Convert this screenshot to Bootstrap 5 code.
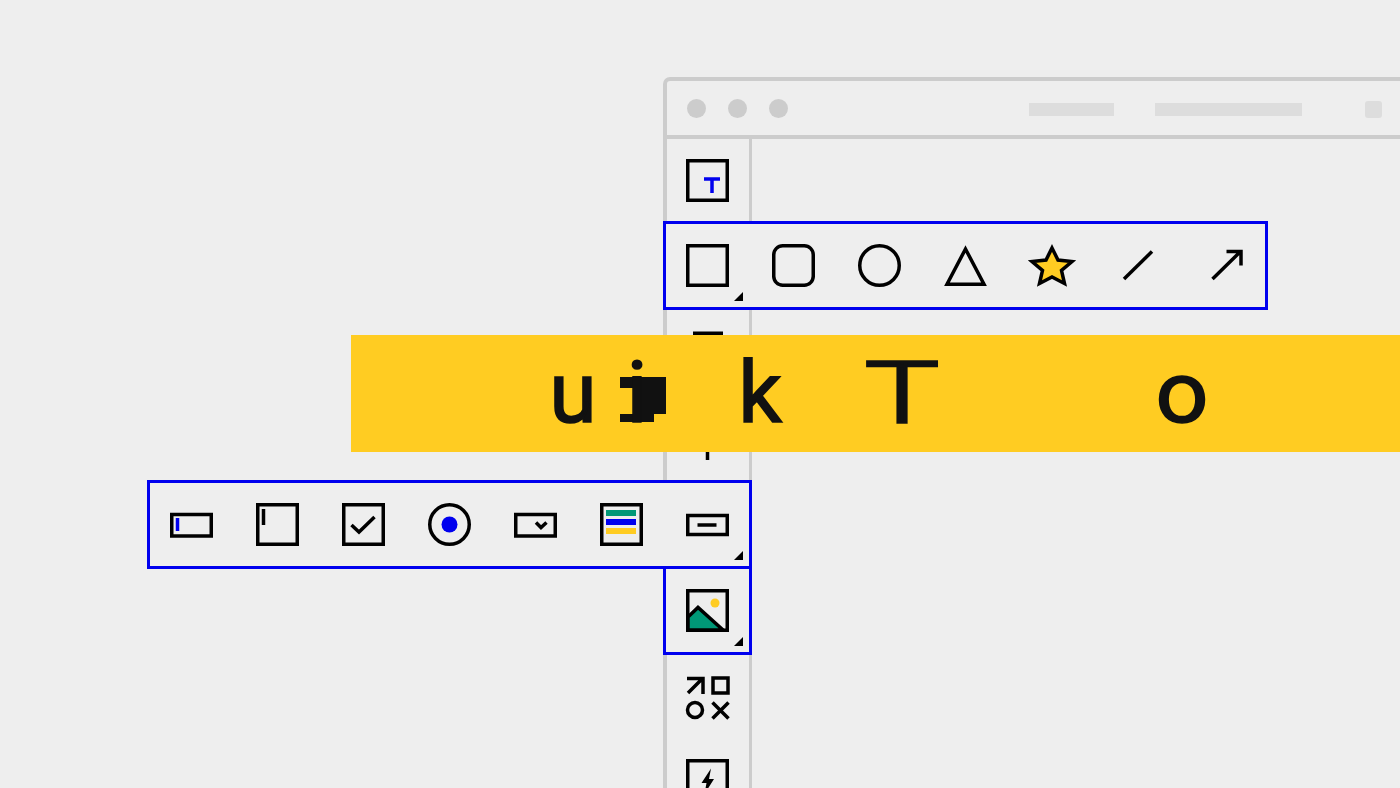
<!DOCTYPE html>
<html lang="en">

<head>
    <meta charset="UTF-8">
    <meta name="viewport" content="width=device-width, initial-scale=1.0">
    <title>Toolbox</title>
    <link href="https://cdn.jsdelivr.net/npm/bootstrap@5.3.0/dist/css/bootstrap.min.css" rel="stylesheet">
    <style>
        body { background: #eee; }
        .stage { width: 1400px; height: 788px; background: #eee; }
        .app-window { left: 663px; top: 77px; width: 800px; height: 800px; border: 4px solid #ccc; border-radius: 7px 0 0 0; }
        .title-bar { height: 58px; border-bottom: 4px solid #ccc; padding-left: 20px; }
        .dots { gap: 22px; }
        .dot { width: 19px; height: 19px; border-radius: 50%; background: #ccc; }
        .ghost { height: 13px; background: #ddd; margin-top: 3px; }
        .ghost-a { width: 85px; margin-left: 241px; }
        .ghost-b { width: 147px; margin-left: 41px; }
        .ghost-c { width: 17px; height: 17px; margin-left: 63px; margin-top: 3px; border-radius: 3px; }
        .side-bar { width: 85px; height: 700px; border-right: 3px solid #ccc; padding: 20px 0 0 19px; gap: 43px; }
        .tool { width: 43px; height: 43px; flex: none; }
        .tool svg { display: block; overflow: visible; fill: none; stroke: #000; stroke-width: 3.5; }
        .tool-up { margin-top: -2px; }
        .corner { right: -14px; bottom: -14px; width: 9px; height: 9px; background: #000; clip-path: polygon(100% 0, 100% 100%, 0 100%); }
        .tray { border: 3px solid #0000ee; padding: 20px; gap: 43px; background: #eee; }
        .tray-shapes { left: 663px; top: 221px; }
        .tray-forms { left: 147px; top: 480px; }
        .tray-media { left: 663px; top: 566px; }
        .banner { left: 351px; top: 335px; width: 1049px; height: 117px; background: #fc2; color: #111; }
        .word { display: grid; grid-template-columns: 80px 60px 174px 110px 450px; padding-left: 182px; height: 117px; font: 86px/116px Roboto, sans-serif; -webkit-text-stroke: 1.6px #111; }
        .word span { text-align: center; position: relative; }
        .wide-t { display: block; font-weight: 300; transform: scaleX(1.45); -webkit-text-stroke: 2.6px #111; }
        .big-o { display: block; transform: scaleX(1.08); }
        .blob { left: 7px; top: 42px; width: 46px; height: 45px; background: #111; clip-path: polygon(0 0, 100% 0, 100% 37px, 34px 37px, 34px 100%, 0 100%, 0 37px, 14px 37px, 14px 11px, 0 11px); }
        .stem { left: -6px; }
    </style>
</head>

<body>
    <div class="stage position-relative overflow-hidden">

        <div class="app-window position-absolute">
            <div class="title-bar d-flex align-items-center">
                <div class="dots d-flex">
                    <div class="dot"></div>
                    <div class="dot"></div>
                    <div class="dot"></div>
                </div>
                <div class="ghost ghost-a"></div>
                <div class="ghost ghost-b"></div>
                <div class="ghost ghost-c"></div>
            </div>
            <div class="side-bar d-flex flex-column">
                <div class="tool"><svg width="43" height="43"><rect x="1.75" y="1.75" width="39.5" height="39.500"/><path d="M18 20H34M26 20V34" stroke="#0000ee" stroke-width="3.5"/></svg></div>
                <div class="tool"></div>
                <div class="tool"><svg width="43" height="43"><path d="M7 2.500H37" stroke-width="4"/></svg></div>
                <div class="tool"><svg width="43" height="43"><path d="M21.500 0V43"/></svg></div>
                <div class="tool"></div>
                <div class="tool"></div>
                <div class="tool"><svg width="43" height="43"><path d="M1 3.500H17V19M2 18L16 4"/><rect x="27" y="3" width="15" height="15"/><circle cx="9" cy="35" r="7.500"/><path d="M26.500 27.500L42.500 43.500M42.500 27.500L26.500 43.500"/></svg></div>
                <div class="tool tool-up"><svg width="43" height="43"><rect x="1.75" y="1.75" width="39.5" height="39.500"/><path d="M25 9.500L15.500 24H20.500L18.500 35L28 20H23Z" fill="#000" stroke="none"/></svg></div>
            </div>
        </div>

        <div class="tray tray-shapes position-absolute d-flex">
            <div class="tool position-relative"><svg width="43" height="43"><rect x="1.75" y="1.75" width="39.5" height="39.500"/></svg><div class="corner position-absolute"></div></div>
            <div class="tool"><svg width="43" height="43"><rect x="1.75" y="1.75" width="39.5" height="39.500" rx="9"/></svg></div>
            <div class="tool"><svg width="43" height="43"><circle cx="21.500" cy="21.500" r="19.750"/></svg></div>
            <div class="tool"><svg width="43" height="43"><path d="M21.500 5L40 40.250H3Z"/></svg></div>
            <div class="tool"><svg width="43" height="43"><path d="M22 4L28 16L42 17.500L31.500 26.500L34.500 39.500L22 33L9.500 39.500L12.500 26.500L2 17.500L16 16Z" fill="#fc2"/></svg></div>
            <div class="tool"><svg width="43" height="43"><path d="M8 35L36 7.500"/></svg></div>
            <div class="tool"><svg width="43" height="43"><path d="M10.500 35L38 8M24.500 7.500H39V21.500"/></svg></div>
        </div>

        <div class="banner position-absolute">
            <div class="word">
                <span>u</span>
                <span><i class="blob position-absolute"></i><b class="stem fw-normal position-relative">i</b></span>
                <span>k</span>
                <span><b class="wide-t">T</b></span>
                <span><b class="big-o fw-normal">o</b></span>
            </div>
        </div>

        <div class="tray tray-forms position-absolute d-flex">
            <div class="tool"><svg width="43" height="43"><rect x="1.75" y="11.500" width="39.5" height="21.500"/><path d="M7.500 15V28" stroke="#0000ee"/></svg></div>
            <div class="tool"><svg width="43" height="43"><rect x="1.75" y="1.750" width="39.5" height="39.500"/><path d="M7.500 6V22"/></svg></div>
            <div class="tool"><svg width="43" height="43"><rect x="1.75" y="1.750" width="39.5" height="39.500"/><path d="M9.500 22L17 29L32.500 14"/></svg></div>
            <div class="tool"><svg width="43" height="43"><circle cx="21.500" cy="21.500" r="19.750"/><circle cx="21.500" cy="21.500" r="8" fill="#0000ee" stroke="none"/></svg></div>
            <div class="tool"><svg width="43" height="43"><rect x="1.75" y="11.500" width="39.5" height="21.500"/><path d="M22 19.500L27 24.500L32.500 19.500"/></svg></div>
            <div class="tool"><svg width="43" height="43"><rect x="1.75" y="1.750" width="39.5" height="39.500"/><rect x="6" y="7" width="30" height="6" fill="#009877" stroke="none"/><rect x="6" y="16" width="30" height="6" fill="#0000ee" stroke="none"/><rect x="6" y="25" width="30" height="6" fill="#fc2" stroke="none"/></svg></div>
            <div class="tool position-relative"><svg width="43" height="43"><rect x="1.75" y="12.500" width="39.5" height="19"/><path d="M11.500 22H30.500"/></svg><div class="corner position-absolute"></div></div>
        </div>

        <div class="tray tray-media position-absolute d-flex">
            <div class="tool position-relative"><svg width="43" height="43"><rect x="1.75" y="1.750" width="39.5" height="39.500"/><circle cx="29" cy="14" r="4.500" fill="#fc2" stroke="none"/><path d="M2 28L12 18.500L37 41H2Z" fill="#009877"/></svg><div class="corner position-absolute"></div></div>
        </div>
    </div>

    <script src="https://cdn.jsdelivr.net/npm/bootstrap@5.3.0/dist/js/bootstrap.bundle.min.js"></script>
</body>

</html>
